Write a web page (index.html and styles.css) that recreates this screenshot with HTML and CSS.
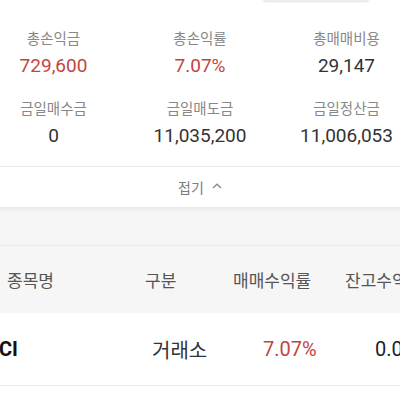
FILE: index.html
```html
<!DOCTYPE html>
<html lang="ko">
<head>
<meta charset="utf-8">
<link rel="stylesheet" href="styles.css">
</head>
<body>
<div class="topbar"><div class="pill"></div></div>
<section class="stats">
  <div class="cell"><div class="label">총손익금</div><div class="value red">729,600</div></div>
  <div class="cell"><div class="label">총손익률</div><div class="value red">7.07%</div></div>
  <div class="cell"><div class="label">총매매비용</div><div class="value">29,147</div></div>
  <div class="cell"><div class="label">금일매수금</div><div class="value">0</div></div>
  <div class="cell"><div class="label">금일매도금</div><div class="value">11,035,200</div></div>
  <div class="cell"><div class="label">금일정산금</div><div class="value">11,006,053</div></div>
</section>
<div class="fold">
  <span class="fold-text">접기</span>
  <svg class="caret" width="10" height="6" viewBox="0 0 10 6"><path d="M1 5 L5 1.3 L9 5" fill="none" stroke="#8a8a8a" stroke-width="1.4"/></svg>
</div>
<div class="spacer"></div>
<div class="thead">
  <div class="th c1">종목명</div>
  <div class="th c2">구분</div>
  <div class="th c3">매매수익률</div>
  <div class="th c4">잔고수익률</div>
</div>
<div class="trow">
  <div class="td d1">CI</div>
  <div class="td d2">거래소</div>
  <div class="td d3 up">7.07%</div>
  <div class="td d4">0.00%</div>
</div>
</body>
</html>
```
FILE: styles.css
```css
html, body {
  margin: 0;
  padding: 0;
  background: #ffffff;
  width: 400px;
  height: 400px;
  overflow: hidden;
  font-family: Roboto, "Noto Sans CJK KR", sans-serif;
}
.topbar {
  height: 3px;
  display: flex;
}
.pill {
  margin-left: 263px;
  width: 106px;
  height: 2px;
  background: #ececec;
  border-radius: 0 0 3px 3px;
  box-shadow: 0 1px 1px rgba(0,0,0,0.04);
}
.stats {
  display: grid;
  grid-template-columns: 107px 1fr 107px;
  row-gap: 21px;
  padding: 27px 0 17px;
  border-bottom: 1px solid #e9e9e9;
}
.cell {
  text-align: center;
  white-space: nowrap;
}
.label {
  font-size: 14.5px;
  line-height: 20px;
  color: #888888;
}
.value {
  margin-top: 2px;
  font-size: 19px;
  line-height: 27px;
  color: #333333;
}
.red { color: #c4443d; }
.fold {
  height: 40px;
  display: flex;
  align-items: center;
  justify-content: center;
  gap: 8px;
}
.fold-text {
  font-size: 14px;
  color: #7d7d7d;
}
.caret { margin-top: -2px; }
.spacer {
  height: 38px;
  background: #f5f5f5;
  box-shadow: inset 0 4px 4px -2px rgba(0,0,0,0.06);
  border-bottom: 1px solid #ebebeb;
}
.thead {
  height: 67px;
  background: #f6f6f6;
  display: flex;
  align-items: center;
  white-space: nowrap;
  overflow: hidden;
}
.th {
  font-size: 17px;
  color: #555555;
  flex: none;
}
.c1 { width: 138px; padding-left: 7px; }
.c2 { width: 88px; }
.c3 { width: 112px; }
.trow {
  height: 72px;
  background: #ffffff;
  border-bottom: 1px solid #ececec;
  display: flex;
  align-items: center;
  white-space: nowrap;
  overflow: hidden;
}
.td {
  font-size: 20px;
  color: #222222;
  flex: none;
}
.td.up { color: #c4443d; }
.d1 { width: 153px; font-weight: 700; color: #111111; margin-left: -1px; }
.d2 { width: 111px; color: #333333; }
.d3 { width: 112px; }
```
